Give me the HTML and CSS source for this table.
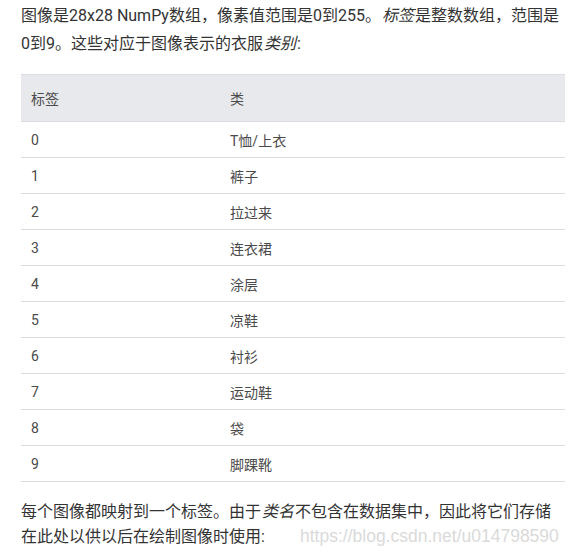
FILE: index.html
```html
<!DOCTYPE html>
<html lang="zh">
<head>
<meta charset="utf-8">
<link rel="stylesheet" href="styles.css">
</head>
<body>
<div class="page">
  <p class="para first">图像是28x28 NumPy数组，像素值范围是0到255。<em>标签</em>是整数数组，范围是0到9。这些对应于图像表示的衣服<em>类别</em>:</p>
  <table class="tbl">
    <thead>
      <tr><th class="c1">标签</th><th>类</th></tr>
    </thead>
    <tbody>
      <tr><td class="c1">0</td><td>T恤/上衣</td></tr>
      <tr><td class="c1">1</td><td>裤子</td></tr>
      <tr><td class="c1">2</td><td>拉过来</td></tr>
      <tr><td class="c1">3</td><td>连衣裙</td></tr>
      <tr><td class="c1">4</td><td>涂层</td></tr>
      <tr><td class="c1">5</td><td>凉鞋</td></tr>
      <tr><td class="c1">6</td><td>衬衫</td></tr>
      <tr><td class="c1">7</td><td>运动鞋</td></tr>
      <tr><td class="c1">8</td><td>袋</td></tr>
      <tr><td class="c1">9</td><td>脚踝靴</td></tr>
    </tbody>
  </table>
  <p class="para last">每个图像都映射到一个标签。由于<em>类名</em>不包含在数据集中，因此将它们存储在此处以供以后在绘制图像时使用:</p>
  <div class="watermark">https://blog.csdn.net/u014798590</div>
</div>
</body>
</html>
```
FILE: styles.css
```css
html, body {
  margin: 0;
  padding: 0;
  background: #ffffff;
}
body {
  font-family: "Roboto", "Noto Sans CJK SC", sans-serif;
  color: #333333;
}
.page {
  position: relative;
  width: 577px;
  height: 552px;
  padding: 0 12px 0 21px;
  box-sizing: border-box;
  overflow: hidden;
}
.para {
  margin: 0;
  font-size: 16px;
  line-height: 28px;
}
.para.first {
  padding-top: 2px;
}
.para em {
  font-style: italic;
  padding: 0 1px;
}
.tbl {
  margin-top: 16px;
  width: 544px;
  border-collapse: collapse;
  font-size: 14px;
  color: #4a4a4a;
}
.tbl th {
  background: #e8e9ec;
  font-weight: normal;
  text-align: left;
  height: 46px;
  padding: 0 10px;
  border-top: 1px solid #dadce0;
  border-bottom: 1px solid #dadce0;
}
.tbl td {
  height: 35px;
  padding: 0 10px;
  border-bottom: 1px solid #dadce0;
}
.tbl .c1 {
  width: 179px;
}
.para.last {
  margin-top: 17px;
  line-height: 25px;
}
.watermark {
  position: absolute;
  left: 300px;
  top: 526px;
  font-family: "Liberation Sans", "Roboto", sans-serif;
  font-size: 17.5px;
  color: #dadada;
  white-space: nowrap;
}
```
